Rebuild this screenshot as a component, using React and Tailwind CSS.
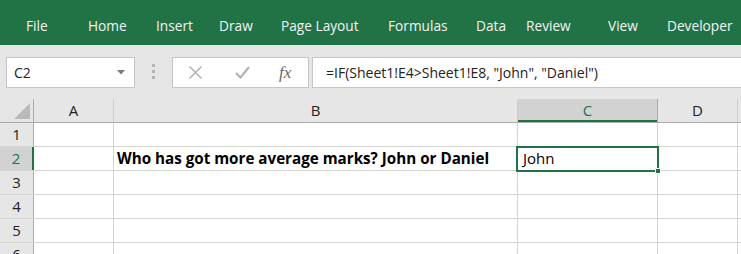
import React from 'react'

const tabs = [
  ['File', 'w-[62px]'],
  ['Home', 'w-[68px]'],
  ['Insert', 'w-[63px]'],
  ['Draw', 'w-[62px]'],
  ['Page Layout', 'w-[107px]'],
  ['Formulas', 'w-[88px]'],
  ['Data', 'w-[50px]'],
  ['Review', 'w-[82px]'],
  ['View', 'w-[59px]'],
  ['Developer', 'w-[74px]'],
]

const cols = [
  ['A', 'w-[80px]'],
  ['B', 'w-[404px]'],
  ['C', 'w-[140px]'],
  ['D', 'w-[80px]'],
  ['', 'w-[80px]'],
]

const calibri = "font-['Open_Sans','Liberation_Sans',sans-serif]"

function Ribbon() {
  return (
    <div className="flex h-[45px] items-center overflow-hidden bg-[#217346] pl-[26px] pt-[8px] font-['Open_Sans',sans-serif] text-[13.7px] text-[#f3f3f3]">
      {tabs.map(([t, w]) => (
        <div key={t} className={`shrink-0 whitespace-nowrap ${w}`}>{t}</div>
      ))}
    </div>
  )
}

function FormulaBar() {
  return (
    <div className="flex h-[54px] items-start bg-[#e6e6e6] pt-[12px] pl-[6px]">
      <div className="flex h-[31px] w-[129px] shrink-0 items-center justify-between border border-[#c6c6c6] bg-white pl-[7px] pr-[9px]">
        <span className={`${calibri} text-[14px] text-[#222]`}>C2</span>
        <svg width="8" height="5" viewBox="0 0 8 5"><path d="M0 0h8L4 4.5z" fill="#7a7a7a" /></svg>
      </div>
      <div className="flex w-[37px] shrink-0 flex-col items-center gap-[3px] pt-[7px]">
        <span className="h-[3px] w-[3px] bg-[#b4b4b4]" />
        <span className="h-[3px] w-[3px] bg-[#b4b4b4]" />
        <span className="h-[3px] w-[3px] bg-[#b4b4b4]" />
      </div>
      <div className="flex h-[31px] w-[137px] shrink-0 items-center border border-[#c6c6c6] bg-white">
        <svg className="ml-[15px]" width="15" height="15" viewBox="0 0 15 15">
          <path d="M1.5 1.5l12 12M13.5 1.5l-12 12" stroke="#b3b3b3" strokeWidth="1.6" fill="none" />
        </svg>
        <svg className="ml-[32px]" width="15" height="13" viewBox="0 0 15 13">
          <path d="M1 7l4.5 4.5L14 1" stroke="#b3b3b3" strokeWidth="2.2" fill="none" />
        </svg>
        <span className="ml-[29px] font-['Liberation_Serif',serif] text-[17px] italic text-[#6a6a6a]">fx</span>
      </div>
      <div className="ml-[3px] flex h-[31px] flex-1 items-center border border-r-0 border-[#c6c6c6] bg-white pl-[13px]">
        <span className={`${calibri} whitespace-nowrap text-[14px] text-[#222]`}>=IF(Sheet1!E4&gt;Sheet1!E8, "John", "Daniel")</span>
      </div>
    </div>
  )
}

function Grid() {
  const rows = [1, 2, 3, 4, 5, 6]
  return (
    <div className={`relative ${calibri} text-[15px]`}>
      <div className="flex h-[24px] border-b border-[#ababab] bg-[#e6e6e6]">
        <div className="relative w-[34px] shrink-0 border-r border-[#ababab]">
          <svg className="absolute right-[3px] bottom-[3px]" width="16" height="16" viewBox="0 0 16 16">
            <path d="M16 0V16H0z" fill="#b9b9b9" />
          </svg>
        </div>
        {cols.map(([c, w], i) => (
          <div
            key={i}
            className={`flex shrink-0 items-center justify-center border-r ${w} ${
              c === 'C' ? 'border-[#ababab] bg-[#d2d2d2] text-[#217346] shadow-[inset_0_-2px_0_#217346]' : 'border-[#cfcfcf] text-[#222]'
            }`}
          >
            {c}
          </div>
        ))}
      </div>
      {rows.map((r) => (
        <div key={r} className="flex h-[24px] border-b border-[#d4d4d4] bg-white">
          <div
            className={`flex w-[34px] shrink-0 items-center justify-center ${
              r === 2
                ? 'border-r-2 border-[#217346] bg-[#d2d2d2] text-[#217346]'
                : 'border-r border-[#ababab] bg-[#e6e6e6] text-[#222]'
            }`}
          >
            {r}
          </div>
          {cols.map(([c, w], i) => (
            <div key={i} className={`flex shrink-0 items-center overflow-visible whitespace-nowrap border-r border-[#d4d4d4] ${w}`}>
              {r === 2 && c === 'B' && <span className="pl-[3px] text-[15.2px] font-bold text-[#000]">Who has got more average marks? John or Daniel</span>}
              {r === 2 && c === 'C' && <span className="pl-[5px] text-[#000]">John</span>}
            </div>
          ))}
        </div>
      ))}
      <div className="pointer-events-none absolute left-[516px] top-[47px] h-[26px] w-[143px] border-2 border-[#217346]">
        <span className="absolute right-[-4px] bottom-[-4px] h-[6px] w-[6px] border border-white bg-[#217346]" />
      </div>
    </div>
  )
}

export default function App() {
  return (
    <div className="h-[254px] w-[741px] overflow-hidden bg-[#e6e6e6]">
      <Ribbon />
      <FormulaBar />
      <Grid />
    </div>
  )
}
